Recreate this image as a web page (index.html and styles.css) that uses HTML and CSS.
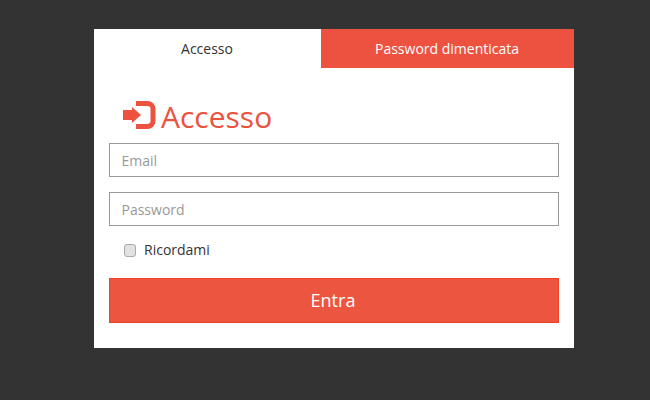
FILE: index.html
```html
<!DOCTYPE html>
<html lang="en">
<head>
    <meta charset="UTF-8">
    <title>Accesso</title>
    <link rel="stylesheet" href="styles.css">
</head>
<body>
    <div class="card">
        <div class="tabs">
            <a class="tab active">Accesso</a>
            <a class="tab">Password dimenticata</a>
        </div>
        <form class="login-form">
            <h1 class="title">
                <svg class="title-icon" width="33" height="28" viewBox="0 0 33 28">
                    <path d="M13 2.500h11.500a5.500 5.500 0 0 1 5.500 5.500v12a5.500 5.500 0 0 1-5.500 5.500H13" fill="none" stroke="#ec523f" stroke-width="5"/>
                    <path d="M0 9h9V6l9 8-9 8v-3H0z" fill="#ec523f"/>
                </svg>
                Accesso
            </h1>
            <input class="field" type="text" placeholder="Email">
            <input class="field" type="password" placeholder="Password">
            <label class="remember">
                <input type="checkbox">
                <span class="remember-text">Ricordami</span>
            </label>
            <button class="submit-btn" type="button">Entra</button>
        </form>
    </div>
</body>
</html>
```

FILE: styles.css
```css
* {
    margin: 0;
    padding: 0;
    box-sizing: border-box;
}

body {
    background: #333333;
    font-family: 'Open Sans', sans-serif;
    font-size: 14px;
    color: #333333;
    padding-top: 29px;
}

.card {
    width: 480px;
    height: 319px;
    margin-left: 94px;
    background: #ffffff;
}

.tabs {
    display: flex;
    height: 39px;
}

.tab {
    display: flex;
    align-items: center;
    justify-content: center;
    flex: 0 0 253px;
    padding-right: 1px;
    background: #ec523f;
    color: #ffffff;
    font-size: 14px;
}

.tab.active {
    flex: 0 0 227px;
    background: #ffffff;
    color: #333333;
}

.login-form {
    padding: 33px 15px 0;
}

.title {
    display: flex;
    align-items: flex-start;
    gap: 5px;
    height: 35px;
    padding-left: 14px;
    margin-bottom: 7px;
    font-size: 30px;
    font-weight: 400;
    line-height: 32px;
    color: #ec523f;
}

.title-icon {
    flex: none;
}

.field {
    display: block;
    width: 100%;
    height: 34px;
    padding: 0 11.500px;
    margin-bottom: 15px;
    border: 1px solid #999999;
    border-radius: 0;
    outline: none;
    font-family: inherit;
    font-size: 14px;
    color: #333333;
}

.field::placeholder {
    color: #999999;
    opacity: 1;
}

.remember {
    display: flex;
    align-items: center;
    gap: 8px;
    height: 20px;
    padding-left: 15px;
    margin-top: -1px;
    margin-bottom: 18px;
}

.remember input {
    appearance: none;
    width: 12px;
    height: 13px;
    border: 1px solid #aaaaaa;
    border-radius: 3px;
    background: #e2e2e2;
}

.remember-text {
    margin-bottom: 2px;
}

.submit-btn {
    display: block;
    width: 100%;
    height: 45px;
    padding-right: 2px;
    padding-bottom: 2px;
    border: 1px solid #f0402a;
    background: #ec5540;
    color: #ffffff;
    font-family: inherit;
    font-size: 18px;
}
```
